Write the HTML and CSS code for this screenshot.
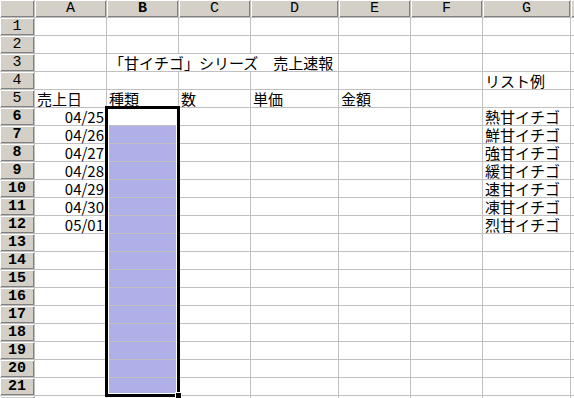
FILE: index.html
```html
<!DOCTYPE html>
<html lang="ja">
<head>
    <meta charset="UTF-8" />
    <title>売上速報</title>
    <link rel="stylesheet" href="styles.css">
</head>
<body>
    <div class="sheet">
        <!-- column headers -->
        <div class="hd"></div><div class="hd">A</div><div class="hd on">B</div><div class="hd">C</div><div class="hd">D</div><div class="hd">E</div><div class="hd">F</div><div class="hd">G</div><div class="hd"></div>

        <div class="hd rh">1</div><div></div><div></div><div></div><div></div><div></div><div></div><div></div><div></div>
        <div class="hd rh">2</div><div></div><div></div><div></div><div></div><div></div><div></div><div></div><div></div>
        <div class="hd rh">3</div><div></div><div class="span3">「甘イチゴ」シリーズ　売上速報</div><div></div><div></div><div></div><div></div>
        <div class="hd rh">4</div><div></div><div></div><div></div><div></div><div></div><div></div><div>リスト例</div><div></div>
        <div class="hd rh">5</div><div>売上日</div><div>種類</div><div>数</div><div>単価</div><div>金額</div><div></div><div></div><div></div>
        <div class="hd rh on">6</div><div class="num">04/25</div><div></div><div></div><div></div><div></div><div></div><div>熱甘イチゴ</div><div></div>
        <div class="hd rh on">7</div><div class="num">04/26</div><div class="hl"></div><div></div><div></div><div></div><div></div><div>鮮甘イチゴ</div><div></div>
        <div class="hd rh on">8</div><div class="num">04/27</div><div class="hl"></div><div></div><div></div><div></div><div></div><div>強甘イチゴ</div><div></div>
        <div class="hd rh on">9</div><div class="num">04/28</div><div class="hl"></div><div></div><div></div><div></div><div></div><div>緩甘イチゴ</div><div></div>
        <div class="hd rh on">10</div><div class="num">04/29</div><div class="hl"></div><div></div><div></div><div></div><div></div><div>速甘イチゴ</div><div></div>
        <div class="hd rh on">11</div><div class="num">04/30</div><div class="hl"></div><div></div><div></div><div></div><div></div><div>凍甘イチゴ</div><div></div>
        <div class="hd rh on">12</div><div class="num">05/01</div><div class="hl"></div><div></div><div></div><div></div><div></div><div>烈甘イチゴ</div><div></div>
        <div class="hd rh on">13</div><div></div><div class="hl"></div><div></div><div></div><div></div><div></div><div></div><div></div>
        <div class="hd rh on">14</div><div></div><div class="hl"></div><div></div><div></div><div></div><div></div><div></div><div></div>
        <div class="hd rh on">15</div><div></div><div class="hl"></div><div></div><div></div><div></div><div></div><div></div><div></div>
        <div class="hd rh on">16</div><div></div><div class="hl"></div><div></div><div></div><div></div><div></div><div></div><div></div>
        <div class="hd rh on">17</div><div></div><div class="hl"></div><div></div><div></div><div></div><div></div><div></div><div></div>
        <div class="hd rh on">18</div><div></div><div class="hl"></div><div></div><div></div><div></div><div></div><div></div><div></div>
        <div class="hd rh on">19</div><div></div><div class="hl"></div><div></div><div></div><div></div><div></div><div></div><div></div>
        <div class="hd rh on">20</div><div></div><div class="hl"></div><div></div><div></div><div></div><div></div><div></div><div></div>
        <div class="hd rh on">21</div><div></div><div class="hl"></div><div></div><div></div><div></div><div></div><div></div><div></div>
        <div class="hd rh"></div><div></div><div></div><div></div><div></div><div></div><div></div><div></div><div></div>

        <!-- selection B6:B21 -->
        <span class="selection"><span class="handle"></span></span>
    </div>
</body>
</html>
```

FILE: styles.css
```css
body {
    margin: 0;
    background-color: #fff;
    overflow: hidden;
    font-family: "Noto Sans CJK JP", sans-serif;
    color: #000;
}

.sheet {
    position: relative;
    display: grid;
    grid-template-columns: 34px 71px 71px 71px 87px 71px 71px 87px 60px;
    grid-auto-rows: 17px;
    gap: 1px;
    background-color: #c0c0c0;
    width: max-content;
}

    .sheet > div {
        background-color: #fff;
        font-size: 15px;
        line-height: 17px;
        padding: 0 2px;
        white-space: nowrap;
    }

    .sheet > .hd {
        background-color: #d4d0c8;
        box-shadow: inset 1px 1px #fff, inset -1px -1px #808080;
        font-family: "Liberation Mono", monospace;
        font-size: 15px;
        text-align: center;
        padding: 0;
    }

    .sheet > .on {
        font-weight: bold;
    }

    .sheet > .num {
        text-align: right;
    }

    .sheet > .hl {
        background-color: #b0b0e8;
    }

.span3 {
    grid-column: span 3;
}

.selection {
    position: absolute;
    grid-column: 3 / 4;
    grid-row: 7 / 23;
    inset: -2px;
    border: 3px solid #000;
    box-shadow: inset 0 0 0 1px #fff;
}

.handle {
    position: absolute;
    right: -4px;
    bottom: -4px;
    width: 5px;
    height: 5px;
    background-color: #000;
    outline: 1px solid #fff;
}
```
